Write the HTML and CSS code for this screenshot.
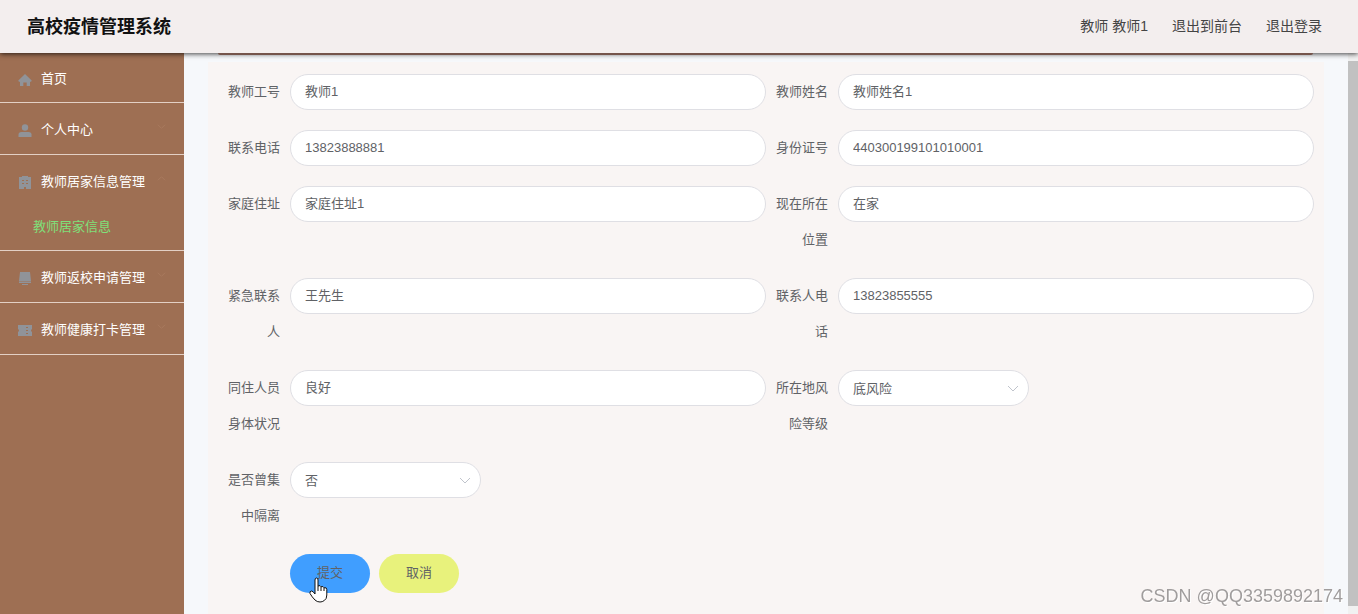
FILE: index.html
```html
<!DOCTYPE html>
<html lang="zh-CN">
<head>
<meta charset="utf-8">
<title>高校疫情管理系统</title>
<link rel="stylesheet" href="styles.css">
</head>
<body>
<header class="topbar">
  <h1 class="brand">高校疫情管理系统</h1>
  <nav class="account">
    <span>教师 教师1</span>
    <a href="#">退出到前台</a>
    <a href="#">退出登录</a>
  </nav>
</header>
<div class="shell">
  <nav class="sidebar">
    <div class="group group-home">
      <a class="item" href="#">
        <svg class="icon" viewBox="0 0 14 14"><path d="M7 1 .3 7.600 1 9l1-.6V13h3.300V9.500h3.400V13H12V8.400l1 .6.7-1.400z"/></svg>
        <span>首页</span>
      </a>
    </div>
    <div class="group">
      <a class="item" href="#">
        <svg class="icon" viewBox="0 0 14 14"><circle cx="7" cy="3.500" r="3.200"/><path d="M.5 13v-2.500q0-2.500 3-2.500h7q3 0 3 2.500V13z"/></svg>
        <span>个人中心</span>
        <svg class="caret" viewBox="0 0 10 10"><path d="M1 3l4 4 4-4"/></svg>
      </a>
    </div>
    <div class="group">
      <a class="item" href="#">
        <svg class="icon" viewBox="0 0 14 14"><path fill-rule="evenodd" d="M1 1h3V0h6v1h3v12H8v-2H6v2H1zM4 4v1h2V4zm4 0v1h2V4zM4 7v1h2V7zm4 0v1h2V7z"/></svg>
        <span>教师居家信息管理</span>
        <svg class="caret" viewBox="0 0 10 10"><path d="M1 7l4-4 4 4"/></svg>
      </a>
      <a class="subitem" href="#">教师居家信息</a>
    </div>
    <div class="group">
      <a class="item" href="#">
        <svg class="icon" viewBox="0 0 14 14"><path d="M2 0h10l1 9H1zM1 9.500h12V11H1zM4 12h6v1H4z"/></svg>
        <span>教师返校申请管理</span>
        <svg class="caret" viewBox="0 0 10 10"><path d="M1 3l4 4 4-4"/></svg>
      </a>
    </div>
    <div class="group">
      <a class="item" href="#">
        <svg class="icon" viewBox="0 0 14 14"><path fill-rule="evenodd" d="M0 1h14v4q-2 1.500 0 3v4H0V8q2-1.500 0-3zM8 3v1h2V3zm0 3v1h2V6zm0 3v1h2V9z"/></svg>
        <span>教师健康打卡管理</span>
        <svg class="caret" viewBox="0 0 10 10"><path d="M1 3l4 4 4-4"/></svg>
      </a>
    </div>
  </nav>
  <main class="content">
    <div class="card-edge"></div>
    <form class="panel">
      <div class="fields">
        <div class="field"><label for="f1">教师工号</label><input id="f1" type="text" value="教师1"></div>
        <div class="field"><label for="f2">教师姓名</label><input id="f2" type="text" value="教师姓名1"></div>
        <div class="field"><label for="f3">联系电话</label><input id="f3" type="text" value="13823888881"></div>
        <div class="field"><label for="f4">身份证号</label><input id="f4" type="text" value="440300199101010001"></div>
        <div class="field"><label for="f5">家庭住址</label><input id="f5" type="text" value="家庭住址1"></div>
        <div class="field"><label for="f6">现在所在位置</label><input id="f6" type="text" value="在家"></div>
        <div class="field"><label for="f7">紧急联系人</label><input id="f7" type="text" value="王先生"></div>
        <div class="field"><label for="f8">联系人电话</label><input id="f8" type="text" value="13823855555"></div>
        <div class="field"><label for="f9">同住人员身体状况</label><input id="f9" type="text" value="良好"></div>
        <div class="field"><label for="f10">所在地风险等级</label>
          <div class="picker"><select id="f10"><option>底风险</option></select><svg class="arrow" viewBox="0 0 12 8"><path d="M1 1l5 5 5-5"/></svg></div></div>
        <div class="field"><label for="f11">是否曾集中隔离</label>
          <div class="picker"><select id="f11"><option>否</option></select><svg class="arrow" viewBox="0 0 12 8"><path d="M1 1l5 5 5-5"/></svg></div></div>
      </div>
      <div class="actions">
        <button class="btn submit" type="button">提交
          <svg class="pointer" viewBox="0 0 19 26"><path d="M6 14V3q0-2 1.500-2T9 3v6q2.500-1.200 3 .8 2.400-1 3 1 2.800-.8 2.800 1.700V18q0 4-2.500 5.500-2 1.500-4.300 1.500-3 0-5-2Q3 20 1 16.500q-.6-2.300 1.500-2.500 1.500 0 3.500 3z"/><path d="M9 9v5M12 10v4M15 11v3"/></svg>
        </button>
        <button class="btn cancel" type="button">取消</button>
      </div>
    </form>
  </main>
  <div class="scroll"><div class="thumb"></div></div>
</div>
<div class="watermark">CSDN @QQ3359892174</div>
</body>
</html>
```
FILE: styles.css
```css
* { box-sizing: border-box; }
body {
  margin: 0;
  min-height: 100vh;
  display: flex;
  flex-direction: column;
  overflow: hidden;
  background: #f6f8fb;
  color: #606266;
  font: 13px/20px "Liberation Sans", "Noto Sans CJK SC", sans-serif;
}
a { color: inherit; text-decoration: none; }
input, select, button { font: inherit; color: inherit; }

.topbar {
  position: relative;
  z-index: 1;
  flex: none;
  height: 53px;
  padding: 0 36px 0 27px;
  display: flex;
  align-items: center;
  justify-content: space-between;
  background: #f3eeee;
  box-shadow: 0 1px 5px rgba(0, 0, 0, .75);
}
.brand { margin: 0; font-size: 18px; line-height: 24px; color: #111; }
.account { display: flex; gap: 24px; padding-bottom: 2px; font-size: 14px; color: #444; }

.shell { flex: 1; display: flex; }

.sidebar { flex: none; width: 184px; background: #9e6f53; color: #fff; }
.group { border-bottom: 1px solid #e3d0c5; }
.item { height: 51px; padding: 2px 18px 0; display: flex; align-items: center; }
.group-home .item { height: 49px; }
.icon { width: 14px; height: 14px; margin: 2px 9px 0 0; fill: #909399; }
.caret {
  width: 9px;
  height: 9px;
  margin: 0 0 6px auto;
  fill: none;
  stroke: #a97b60;
}
.subitem { display: block; padding: 0 33px; line-height: 42px; height: 44px; color: #7fe07a; }

.content { flex: 1; min-width: 0; padding: 0 24px; display: flex; flex-direction: column; }
.card-edge {
  position: relative;
  z-index: 2;
  height: 2px;
  margin: 0 11px 0 10px;
  border-radius: 0 0 6px 6px;
  background: #74544b;
}
.panel { flex: 1; margin-top: 7px; padding: 12px 10px 0; background: #f9f5f4; }
.fields { display: grid; grid-template-columns: 1fr 1fr; row-gap: 20px; }
.field { display: flex; align-items: flex-start; line-height: 36px; }
.field label { flex: none; width: 72px; padding-right: 10px; text-align: right; }
.field input, .field select {
  width: 100%;
  height: 36px;
  padding: 0 14px;
  border: 1px solid #dfdfe4;
  border-radius: 18px;
  background: #fff;
  outline: none;
  appearance: none;
}
.field input { flex: 1; min-width: 0; }
.picker { position: relative; width: 191px; height: 36px; }
.arrow {
  position: absolute;
  right: 10px;
  top: 15px;
  width: 12px;
  height: 8px;
  fill: none;
  stroke: #c0c4cc;
  pointer-events: none;
}
.actions { display: flex; gap: 9px; padding: 20px 0 0 72px; }
.btn {
  position: relative;
  width: 80px;
  height: 39px;
  padding: 0 0 2px;
  border: 0;
  border-radius: 20px;
}
.submit { background: #409eff; }
.cancel { background: #e8f27c; }
.pointer {
  position: absolute;
  left: 19px;
  top: 23px;
  width: 19px;
  height: 26px;
  fill: #fff;
  stroke: #111;
}

.scroll { flex: none; width: 10px; padding: 8px 0; background: #f1f1f1; }
.thumb { height: 100%; background: #c1c1c1; }
.watermark {
  position: fixed;
  right: 15px;
  bottom: 6px;
  z-index: 3;
  font-size: 18px;
  line-height: 24px;
  color: #a09d9d;
  text-shadow: 1px 1px 0 #fff;
}
```
